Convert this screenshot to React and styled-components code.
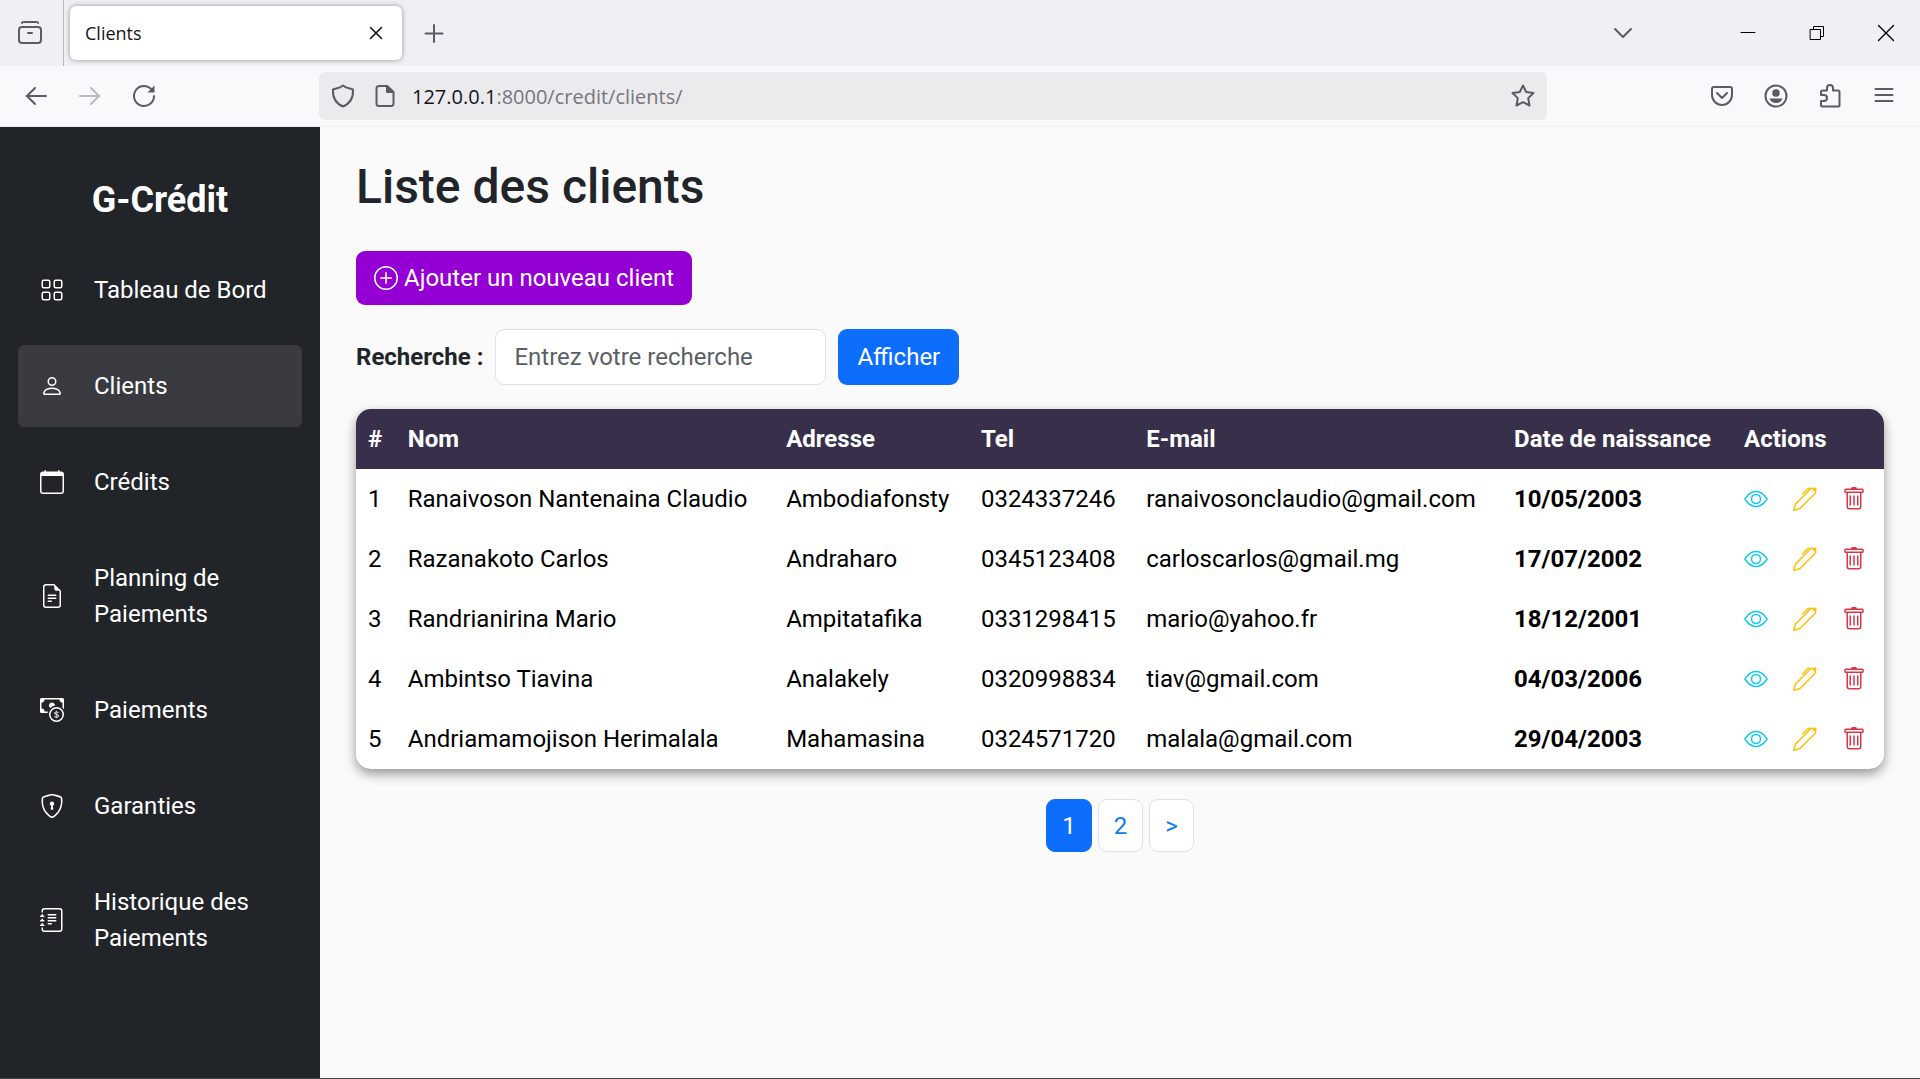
import React from 'react';
import styled, { createGlobalStyle } from 'styled-components';
import {
  BsGrid, BsPerson, BsCalendar, BsFileEarmarkText, BsCashCoin, BsShieldLock,
  BsJournalText, BsEye, BsPen, BsTrash, BsPlusCircle,
} from 'react-icons/bs';

const GlobalStyle = createGlobalStyle`
  *, *::before, *::after { box-sizing: border-box; }
  body { margin: 0; background: #fafafa; color: #212529; font: 24px/36px Roboto, sans-serif; }
  button, input { font: inherit; }
  a { color: inherit; text-decoration: none; }
  svg { display: block; flex: none; }
`;

const Window = styled.div`
  display: flex;
  flex-direction: column;
  min-height: 100vh;
  border-bottom: 1px solid #444347;
`;

const TabBar = styled.div`
  display: flex;
  align-items: center;
  height: 66px;
  background: #f0eff4;
  color: #5b5b66;
`;

const IconButton = styled.button`
  display: grid;
  place-items: center;
  width: ${(p) => p.$width || 54}px;
  height: 48px;
  padding: 0;
  border: 0;
  background: none;
  color: ${(p) => p.$color || '#5b5b66'};
`;

const FirstView = styled.div`
  display: flex;
  align-items: center;
  justify-content: center;
  align-self: stretch;
  width: 64px;
  padding-right: 4px;
  border-right: 1px solid #b5b5bb;
  margin-right: 6px;
`;

const Tab = styled.div`
  display: flex;
  align-items: center;
  justify-content: space-between;
  width: 332px;
  height: 54px;
  padding: 0 2px 0 15px;
  border-radius: 6px;
  background: #fff;
  box-shadow: 0 0 5px rgba(0, 0, 0, 0.4);
  color: #15141a;
  font: 18px/24px "Open Sans", "Noto Sans", sans-serif;
`;

const TabTools = styled.div`
  margin: 0 63px 0 auto;
`;

const WindowControls = styled.div`
  display: flex;
  align-items: center;
`;

const Toolbar = styled.div`
  display: grid;
  grid-template-columns: 319px 1fr 373px;
  align-items: center;
  height: 61px;
  padding-bottom: 1px;
  background: #f9f9fb;
  box-shadow: inset 0 -1px #f0f0f3;
`;

const ToolGroup = styled.div`
  display: flex;
  justify-content: ${(p) => (p.$end ? 'flex-end' : 'flex-start')};
  padding: 0 9px;
`;

const AddressBar = styled.div`
  display: flex;
  align-items: center;
  height: 48px;
  padding: 0 3px;
  border-radius: 6px;
  background: #ebebed;
`;

const Address = styled.div`
  flex: 1;
  padding: 2px 0 0 6px;
  color: #77767d;
  font: 20px/28px "Open Sans", "Noto Sans", sans-serif;
  b { color: #15141a; font-weight: 400; }
`;

const Page = styled.div`
  display: flex;
  flex: 1;
`;

const Sidebar = styled.aside`
  flex: none;
  width: 320px;
  padding: 46px 18px;
  background: #212529;
  color: #fff;
`;

const Brand = styled.div`
  margin-bottom: 22px;
  text-align: center;
  font-size: 36px;
  font-weight: 700;
  line-height: 54px;
`;

const Nav = styled.nav`
  display: flex;
  flex-direction: column;
  gap: 14px;
`;

const NavLink = styled.a`
  display: flex;
  align-items: center;
  gap: 30px;
  padding: 23px 22px;
  border-radius: 6px;
  background: ${(p) => (p.$active ? '#393b40' : 'transparent')};
`;

const Main = styled.main`
  flex: 1;
  min-width: 0;
  padding: 31px 36px;
`;

const Title = styled.h1`
  margin: 0 0 35px;
  font-size: 48px;
  font-weight: 500;
  line-height: 58px;
`;

const AddButton = styled.button`
  display: flex;
  align-items: center;
  gap: 6px;
  height: 54px;
  padding: 0 18px;
  border: 0;
  border-radius: 9px;
  background: #9400d3;
  color: #fff;
`;

const SearchForm = styled.form`
  display: flex;
  align-items: center;
  gap: 12px;
  margin: 24px 0;
  label { font-weight: 700; }
`;

const SearchInput = styled.input`
  width: 331px;
  height: 56px;
  padding: 0 18px;
  border: 1px solid #dee2e6;
  border-radius: 9px;
  background: #fff;
  color: #212529;
  &::placeholder { color: #5b5f64; opacity: 1; }
`;

const SubmitButton = styled.button`
  height: 56px;
  padding: 0 19px;
  border: 0;
  border-radius: 9px;
  background: #0d6efd;
  color: #fff;
`;

const TableCard = styled.div`
  overflow: hidden;
  border-radius: 15px;
  background: #fff;
  box-shadow: 0 5px 12px rgba(0, 0, 0, 0.4);
`;

const Table = styled.table`
  width: 100%;
  border-collapse: collapse;
  color: #000;
  white-space: nowrap;
  th, td { padding: 12px; text-align: left; }
  thead { background: #38304b; color: #fff; }
`;

const Actions = styled.div`
  display: flex;
  align-items: center;
  gap: 25px;
`;

const ActionLink = styled.a`
  && { color: ${(p) => p.$color}; }
`;

const Pagination = styled.nav`
  display: flex;
  justify-content: center;
  gap: 6px;
  margin-top: 30px;
`;

const PageLink = styled.a`
  display: grid;
  place-items: center;
  height: 53px;
  padding: 0 15px;
  border: 1px solid ${(p) => (p.$active ? '#0d6efd' : '#dee2e6')};
  border-radius: 9px;
  background: ${(p) => (p.$active ? '#0d6efd' : '#fff')};
  && { color: ${(p) => (p.$active ? '#fff' : '#0d7bea')}; }
`;

const Glyph = ({ size = 24, width = 2, children }) => (
  <svg width={size} height={size} viewBox="0 0 24 24" fill="none" stroke="currentColor"
    strokeWidth={width} strokeLinecap="round" strokeLinejoin="round" aria-hidden="true">
    {children}
  </svg>
);

const links = [
  ['Tableau de Bord', BsGrid],
  ['Clients', BsPerson],
  ['Crédits', BsCalendar],
  ['Planning de Paiements', BsFileEarmarkText],
  ['Paiements', BsCashCoin],
  ['Garanties', BsShieldLock],
  ['Historique des Paiements', BsJournalText],
];

const clients = [
  ['Ranaivoson Nantenaina Claudio', 'Ambodiafonsty', '0324337246', 'ranaivosonclaudio@gmail.com', '10/05/2003'],
  ['Razanakoto Carlos', 'Andraharo', '0345123408', 'carloscarlos@gmail.mg', '17/07/2002'],
  ['Randrianirina Mario', 'Ampitatafika', '0331298415', 'mario@yahoo.fr', '18/12/2001'],
  ['Ambintso Tiavina', 'Analakely', '0320998834', 'tiav@gmail.com', '04/03/2006'],
  ['Andriamamojison Herimalala', 'Mahamasina', '0324571720', 'malala@gmail.com', '29/04/2003'],
];

function BrowserChrome() {
  return (
    <header>
      <TabBar>
        <FirstView>
          <IconButton aria-label="Firefox View">
            <Glyph><rect x="1" y="6" width="22" height="16" rx="3" /><path d="M4 2c0-1 1-1 2-1h12c1 0 2 0 2 1M10 12h4" /></Glyph>
          </IconButton>
        </FirstView>
        <Tab>
          <span>Clients</span>
          <IconButton $width={48} $color="#15141a" aria-label="Fermer l’onglet">
            <Glyph width={1.6}><path d="M6.5 6.5l11 11M17.5 6.5l-11 11" /></Glyph>
          </IconButton>
        </Tab>
        <IconButton $width={64} aria-label="Nouvel onglet">
          <Glyph><path d="M12 4v17M3.5 12.5h17" /></Glyph>
        </IconButton>
        <TabTools>
          <IconButton aria-label="Onglets"><Glyph><path d="M4 8l8 8 8-8" /></Glyph></IconButton>
        </TabTools>
        <WindowControls>
          <IconButton $width={69} $color="#000" aria-label="Réduire">
            <Glyph width={1}><path d="M5 11.5h14" /></Glyph>
          </IconButton>
          <IconButton $width={69} $color="#000" aria-label="Restaurer">
            <Glyph width={1}><path d="M5.5 8.5h10v10h-10zM8.5 8.500v-3h10v10h-3" /></Glyph>
          </IconButton>
          <IconButton $width={69} $color="#000" aria-label="Fermer">
            <Glyph width={1.4}><path d="M4.5 4.5l15 15M19.5 4.5l-15 15" /></Glyph>
          </IconButton>
        </WindowControls>
      </TabBar>
      <Toolbar>
        <ToolGroup>
          <IconButton aria-label="Précédent"><Glyph><path d="M22 12H2.5M11 4l-8 8 8 8" /></Glyph></IconButton>
          <IconButton $color="#b9b9be" aria-label="Suivant"><Glyph><path d="M2 12h19.5M13 4l8 8-8 8" /></Glyph></IconButton>
          <IconButton aria-label="Actualiser">
            <Glyph><path d="M22 12A10 10 0 1 1 18 4l2 2" /><path d="M22.5 1.500v7h-7z" fill="currentColor" stroke="none" /></Glyph>
          </IconButton>
        </ToolGroup>
        <AddressBar>
          <IconButton $width={42} aria-label="Protection">
            <Glyph><path d="M12 1.5C9 4 5 4.500 2 5.500c-.5 8 3 14 10 17 7-3 10.500-9 10-17-3-1-7-1.500-10-4z" /></Glyph>
          </IconButton>
          <IconButton $width={42} aria-label="Informations du site">
            <Glyph><path d="M14 2H6a2.500 2.500 0 0 0-2.500 2.500v15A2.500 2.500 0 0 0 6 22h12a2.500 2.500 0 0 0 2.500-2.500V8z" /><path d="M14 2v6h6z" fill="currentColor" /></Glyph>
          </IconButton>
          <Address><b>127.0.0.1</b>:8000/credit/clients/</Address>
          <IconButton $width={42} aria-label="Marquer cette page">
            <Glyph><path d="M12 1.500l3.200 6.500 7.300 1-5.300 5.100 1.300 7.400-6.500-3.400-6.500 3.400 1.300-7.400L1.500 9l7.300-1z" /></Glyph>
          </IconButton>
        </AddressBar>
        <ToolGroup $end>
          <IconButton aria-label="Pocket">
            <Glyph><path d="M4 3h16a2 2 0 0 1 2 2v6a10 10 0 0 1-20 0V5a2 2 0 0 1 2-2zM7 9l5 5 5-5" /></Glyph>
          </IconButton>
          <IconButton aria-label="Compte">
            <Glyph><circle cx="12" cy="12" r="10.500" /><circle cx="12" cy="9" r="3.800" fill="currentColor" stroke="none" /><path d="M5.500 14.500h13c-1 3-3.500 4.500-6.500 4.500s-5.500-1.500-6.500-4.500z" fill="currentColor" stroke="none" /></Glyph>
          </IconButton>
          <IconButton aria-label="Extensions">
            <Glyph><path d="M9 6.500V4a3 3 0 0 1 6 0v2.500h5a1.500 1.500 0 0 1 1.500 1.500v13a1.500 1.500 0 0 1-1.500 1.500H4.500A1.500 1.500 0 0 1 3 21v-4h3a3 3 0 0 0 0-6H3V8a1.500 1.500 0 0 1 1.500-1.500z" /></Glyph>
          </IconButton>
          <IconButton aria-label="Menu"><Glyph><path d="M3.500 5h17M3.500 11h17M3.500 17h17" /></Glyph></IconButton>
        </ToolGroup>
      </Toolbar>
    </header>
  );
}

export default function App() {
  return (
    <Window>
      <GlobalStyle />
      <BrowserChrome />
      <Page>
        <Sidebar>
          <Brand>G-Crédit</Brand>
          <Nav>
            {links.map(([label, Icon]) => (
              <NavLink key={label} href="#" $active={label === 'Clients'}>
                <Icon size={24} />
                <span>{label}</span>
              </NavLink>
            ))}
          </Nav>
        </Sidebar>
        <Main>
          <Title>Liste des clients</Title>
          <AddButton type="button"><BsPlusCircle size={24} />Ajouter un nouveau client</AddButton>
          <SearchForm onSubmit={(e) => e.preventDefault()}>
            <label htmlFor="search">Recherche :</label>
            <SearchInput id="search" type="text" placeholder="Entrez votre recherche" />
            <SubmitButton>Afficher</SubmitButton>
          </SearchForm>
          <TableCard>
            <Table>
              <thead>
                <tr>
                  {['#', 'Nom', 'Adresse', 'Tel', 'E-mail', 'Date de naissance', 'Actions'].map((h) => (
                    <th key={h} scope="col">{h}</th>
                  ))}
                </tr>
              </thead>
              <tbody>
                {clients.map(([name, address, phone, mail, birth], i) => (
                  <tr key={name}>
                    <td>{i + 1}</td>
                    <td>{name}</td>
                    <td>{address}</td>
                    <td>{phone}</td>
                    <td>{mail}</td>
                    <td><b>{birth}</b></td>
                    <td>
                      <Actions>
                        <ActionLink href="#" $color="#0dcaf0" aria-label="Voir"><BsEye size={24} /></ActionLink>
                        <ActionLink href="#" $color="#ffc107" aria-label="Modifier"><BsPen size={24} /></ActionLink>
                        <ActionLink href="#" $color="#dc3545" aria-label="Supprimer"><BsTrash size={24} /></ActionLink>
                      </Actions>
                    </td>
                  </tr>
                ))}
              </tbody>
            </Table>
          </TableCard>
          <Pagination aria-label="Pagination">
            <PageLink href="#" $active>1</PageLink>
            <PageLink href="#">2</PageLink>
            <PageLink href="#">&gt;</PageLink>
          </Pagination>
        </Main>
      </Page>
    </Window>
  );
}
